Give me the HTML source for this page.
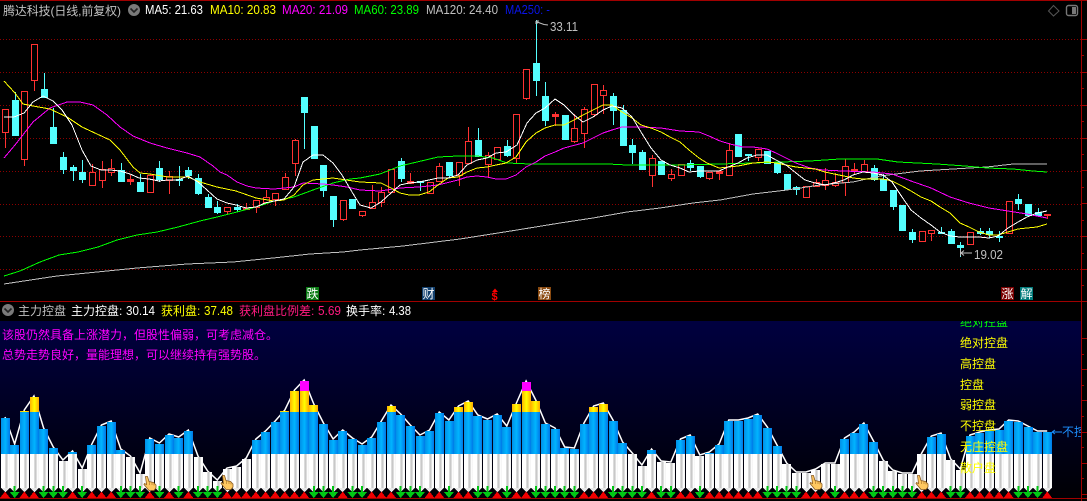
<!DOCTYPE html>
<html><head><meta charset="utf-8">
<style>
html,body{margin:0;padding:0;background:#000;width:1087px;height:501px;overflow:hidden}
svg{display:block}
text{font-family:"WenQuanYi Zen Hei","Liberation Sans","Noto Sans CJK SC",sans-serif;font-size:12px}
.n{font-family:"Liberation Sans","WenQuanYi Zen Hei",sans-serif;font-size:13px}
.m{stroke-width:1;fill:none;shape-rendering:crispEdges}
</style></head><body>
<svg id="s" width="1087" height="501" viewBox="0 0 1087 501" xmlns="http://www.w3.org/2000/svg">
<defs>
<linearGradient id="bg" x1="0" y1="0" x2="0" y2="1"><stop offset="0" stop-color="#000040"/><stop offset="1" stop-color="#000004"/></linearGradient>
<linearGradient id="wh"><stop offset="0" stop-color="#fff"/><stop offset=".46" stop-color="#fff"/><stop offset=".5" stop-color="#c8c8c8"/><stop offset=".72" stop-color="#c8c8c8"/><stop offset=".76" stop-color="#fff"/><stop offset="1" stop-color="#f4f4f4"/></linearGradient>
<linearGradient id="bl"><stop offset="0" stop-color="#0090e8"/><stop offset=".5" stop-color="#00b4ff"/><stop offset="1" stop-color="#0078e8"/></linearGradient>
<linearGradient id="go"><stop offset="0" stop-color="#ffb400"/><stop offset=".5" stop-color="#ffff00"/><stop offset="1" stop-color="#ffa800"/></linearGradient>
<clipPath id="cp"><rect x="0" y="321" width="1081" height="180"/></clipPath>
</defs>
<rect x="0" y="0" width="1087" height="1" fill="#a00000"/>
<rect x="0" y="321" width="1081" height="177" fill="url(#bg)"/>
<g id="grid" shape-rendering="crispEdges"></g>
<g id="cand"></g>
<polyline class="m" stroke="#c0c0c0" points="4,284 57,276 97,272 137,268 187,264 233,262 273,258 310,254 343,252 360,250 403,246 460,239 517,230 560,223 593,218 627,212 660,208 693,203 720,200 753,194 787,190 820,185 853,182 880,176 920,171 953,169 987,167 1013,164 1047,164"/>
<polyline class="m" stroke="#00ff00" points="4,276 20,271 40,262 59,255 78,252 98,247 117,240 137,235 157,232 178,227 200,221 217,217 233,213 256,207 274,201 294,197 313,190 333,183 350,179 360,178 380,174 390,170 400,166 417,162 438,157 458,156 477,156 493,158 507,163 530,164 560,164 587,164 608,164 627,165 680,165 720,164 753,163 810,161 840,159 877,159 898,162 937,164 965,166 987,168 1013,169 1033,171 1047,172"/>
<polyline class="m" stroke="#ff00ff" points="4,158 15,145 33,122 50,108 67,102 80,102 93,105 107,115 120,127 133,136 150,143 167,148 187,153 200,157 213,166 220,172 227,175 237,182 247,186 256,188 274,189 284,188 294,187 303,183 323,184 333,185 347,187 360,190 380,191 400,188 419,187 438,185 458,180 467,177 477,176 487,177 496,179 506,179 516,175 526,167 536,162 545,156 555,152 564,148 583,143 593,138 603,133 612,130 622,127 641,127 661,128 680,131 699,132 709,136 720,141 730,144 743,147 753,147 767,149 776,153 786,158 796,163 810,168 823,170 843,171 873,172 892,174 911,181 931,188 950,197 969,203 989,208 1008,211 1027,214 1047,218"/>
<polyline class="m" stroke="#ffff00" points="4,81 15,93 23,104 33,106 50,109 67,117 82,127 97,134 110,140 120,150 133,167 140,173 150,174 168,177 188,177 200,182 217,187 236,191 256,198 274,201 284,200 294,195 303,185 313,180 333,178 360,182 381,183 391,188 400,193 409,195 419,195 429,192 438,185 448,178 458,177 467,172 477,168 487,167 496,165 506,163 516,157 526,142 536,133 545,128 555,125 564,125 574,120 583,115 593,110 603,105 612,105 622,112 632,118 641,125 651,128 661,132 670,137 680,142 689,150 699,158 707,163 719,168 738,166 753,163 767,162 776,163 786,165 796,167 805,168 815,169 825,172 834,174 844,176 853,178 863,179 873,179 883,179 892,181 902,186 911,191 921,197 931,201 940,207 950,213 960,223 969,227 979,232 989,235 998,235 1008,232 1018,229 1027,228 1037,227 1047,224"/>
<polyline class="m" stroke="#ffffff" points="4,117 14,117 24,113 33,102 43,96 53,101 62,110 72,125 82,150 91,166 101,170 110,170 120,171 130,174 139,178 149,179 159,181 168,180 178,180 188,176 198,182 207,190 217,199 227,203 236,205 246,208 256,207 265,203 274,201 284,199 294,187 303,162 313,155 323,155 333,163 342,175 352,192 360,205 371,208 381,202 391,193 400,185 409,183 419,182 429,180 438,178 448,178 458,175 467,165 477,160 487,158 496,153 506,152 517,145 527,123 536,113 545,108 555,99 564,105 574,115 583,122 593,117 603,110 612,106 622,108 632,117 641,132 651,148 661,160 670,165 680,168 689,172 699,171 709,171 719,171 728,167 738,163 747,158 757,155 767,155 776,160 786,165 796,173 805,180 815,183 825,185 834,183 844,180 853,175 863,172 873,173 883,175 892,182 902,197 911,210 921,218 931,225 940,232 950,236 960,237 969,237 979,237 989,238 998,236 1008,228 1018,222 1027,217 1037,213 1047,211"/>

<!-- top legend -->
<text x="3" y="15" fill="#c0c0c0" textLength="118">腾达科技(日线,前复权)</text>
<circle cx="134" cy="10" r="6" fill="#7a7a7a"/><path d="M130.5 8.5L134 12L137.5 8.5" stroke="#222" stroke-width="1.6" fill="none"/>
<text class="n" x="145" y="14" fill="#fff" textLength="58" lengthAdjust="spacingAndGlyphs">MA5: 21.63</text>
<text class="n" x="210" y="14" fill="#ffff00" textLength="66" lengthAdjust="spacingAndGlyphs">MA10: 20.83</text>
<text class="n" x="282" y="14" fill="#ff00ff" textLength="66" lengthAdjust="spacingAndGlyphs">MA20: 21.09</text>
<text class="n" x="354" y="14" fill="#00ff00" textLength="65" lengthAdjust="spacingAndGlyphs">MA60: 23.89</text>
<text class="n" x="426" y="14" fill="#c0c0c0" textLength="72" lengthAdjust="spacingAndGlyphs">MA120: 24.40</text>
<text class="n" x="505" y="14" fill="#0a14e8" textLength="45" lengthAdjust="spacingAndGlyphs">MA250: -</text>
<path d="M1053.5 5.5L1059 11L1053.5 16L1048.5 11Z" fill="none" stroke="#555"/>
<rect x="1066.5" y="5.5" width="11" height="10" rx="2" fill="none" stroke="#777" stroke-width="1.4"/><rect x="1072" y="7" width="4" height="7" fill="#777"/>

<!-- extremes -->
<path d="M536 21L536 24M536 21L539 21M536 23L538 23M537 22L544 24.5L548 25" stroke="#c0c0c0" fill="none"/>
<text class="n" x="550" y="31" fill="#c0c0c0" textLength="28" lengthAdjust="spacingAndGlyphs">33.11</text>
<path d="M960.5 250V256M961 253H972M961 253L964 250.5M961 253L964 255.5" stroke="#c0c0c0" fill="none"/>
<text class="n" x="974" y="259" fill="#c0c0c0" textLength="29" lengthAdjust="spacingAndGlyphs">19.02</text>

<!-- event tags -->
<rect x="306" y="287" width="13" height="13" fill="#0a7a14"/><text x="306.5" y="298" fill="#fff">跌</text>
<rect x="422" y="287" width="13" height="13" fill="#12406e"/><text x="422.5" y="298" fill="#fff">财</text>
<path d="M495 288.5L498 292H492Z" fill="#f00"/><text class="n" x="491.5" y="300" fill="#f00" style="font-size:11px;font-weight:bold">$</text>
<rect x="538" y="287" width="13" height="13" fill="#8a4a10"/><text x="538.5" y="298" fill="#fff">榜</text>
<rect x="1001" y="287" width="13" height="13" fill="#7a0000"/><text x="1001.5" y="298" fill="#fff">涨</text>
<rect x="1020" y="287" width="13" height="13" fill="#007a7a"/><text x="1020.5" y="298" fill="#fff">解</text>

<!-- lower legend -->
<rect x="0" y="301" width="1087" height="1" fill="#a00000"/>
<circle cx="8" cy="310" r="6" fill="#7a7a7a"/><path d="M4.5 308.5L8 312L11.5 308.5" stroke="#222" stroke-width="1.6" fill="none"/>
<text x="18" y="315" fill="#c0c0c0">主力控盘</text>
<text x="71" y="315" fill="#fff">主力控盘:</text><text class="n" x="126" y="315" fill="#fff" textLength="29" lengthAdjust="spacingAndGlyphs">30.14</text>
<text x="161" y="315" fill="#ffff00">获利盘:</text><text class="n" x="204" y="315" fill="#ffff00" textLength="29" lengthAdjust="spacingAndGlyphs">37.48</text>
<text x="239" y="315" fill="#ff1a80">获利盘比例差:</text><text class="n" x="318" y="315" fill="#ff1a80" textLength="23" lengthAdjust="spacingAndGlyphs">5.69</text>
<text x="346" y="315" fill="#fff">换手率:</text><text class="n" x="389" y="315" fill="#fff" textLength="22" lengthAdjust="spacingAndGlyphs">4.38</text>

<!-- bars -->
<polyline id="ln" fill="none" stroke="#fff" stroke-width="1.5"/>
<g id="bars" shape-rendering="crispEdges"></g>
<g id="marks" shape-rendering="crispEdges"></g>
<g id="hands"></g>

<!-- messages -->
<text x="2" y="339" fill="#ff00ff">该股仍然具备上涨潜力&#xFF0C;但股性偏弱&#xFF0C;可考虑减仓。</text>
<text x="2" y="359" fill="#ff00ff">总势走势良好&#xFF0C;量能理想&#xFF0C;可以继续持有强势股。</text>

<!-- level labels -->
<g clip-path="url(#cp)">
<text x="960" y="326" fill="#00ff00">绝对控盘</text>
<text x="960" y="347" fill="#ffff00">绝对控盘</text>
<text x="960" y="368" fill="#ffff00">高控盘</text>
<text x="960" y="389" fill="#ffff00">控盘</text>
<text x="960" y="409" fill="#ffff00">弱控盘</text>
<text x="960" y="430" fill="#ffff00">不控盘</text>
<text x="960" y="451" fill="#ffff00">无庄控盘</text>
<text x="960" y="472" fill="#ffff00">散户盘</text>
<path d="M1052 432H1062M1052 432L1055 430M1052 432L1055 434" stroke="#1e90ff" fill="none"/>
<text x="1062" y="436" fill="#1e90ff">不控盘</text>
</g>

<!-- axes -->
<rect x="0" y="498" width="1087" height="1" fill="#a00000"/>
<rect x="1081" y="0" width="1" height="501" fill="#a00000"/>
<g id="ticks" shape-rendering="crispEdges"></g>
</svg>
<script>
var ns='http://www.w3.org/2000/svg';
function el(p,n,a){var e=document.createElementNS(ns,n);for(var k in a)e.setAttribute(k,a[k]);p.appendChild(e);return e}
var $=function(i){return document.getElementById(i)};
function cx(i){return 5+9.65*i}
[39,72,105,138,171,204,236,269].forEach(function(y){
 el($('grid'),'line',{x1:0,x2:1081,y1:y+.5,y2:y+.5,stroke:'#8c0000','stroke-dasharray':'1 2'})});
var C=[[0,109,109,132,148],[1,92,100,135,135],[0,91,91,159,166],[0,44,44,80,91],[1,73,89,97,97],[1,108,127,143,143],[1,152,157,169,174],[1,165,167,170,181],[1,160,172,179,183],[0,164,172,185,185],[0,161,169,180,188],[0,159,168,172,176],[1,163,170,181,182],[0,175,179,181,185],[1,174,182,191,191],[0,174,175,192,193],[1,161,168,179,182],[0,171,176,180,194],[1,166,179,180,186],[1,167,170,175,179],[1,174,178,193,195],[1,194,197,207,207],[1,201,207,212,214],[0,207,207,211,214],[1,204,207,209,212],[0,203,208,209,209],[0,200,200,207,213],[0,190,197,202,202],[0,193,193,199,206],[0,173,177,189,189],[0,139,140,163,176],[1,97,97,112,149],[1,126,126,158,158],[1,165,165,190,197],[1,196,196,219,227],[0,200,200,219,221],[1,199,199,208,209],[0,211,211,215,217],[0,185,202,208,208],[0,187,192,202,207],[0,169,169,192,192],[1,158,161,178,182],[0,173,181,183,183],[1,181,181,182,191],[0,182,182,193,193],[0,163,166,181,181],[1,162,162,175,177],[0,162,162,175,186],[0,127,141,163,163],[1,128,140,156,156],[0,152,155,164,177],[0,147,147,159,159],[1,140,146,155,157],[0,114,114,158,164],[0,69,69,98,100],[1,20,63,80,96],[1,82,96,120,126],[0,112,114,116,126],[1,115,115,139,139],[0,114,128,141,143],[0,107,109,133,148],[0,84,84,114,117],[0,85,90,95,114],[1,93,96,110,125],[1,105,110,145,145],[1,139,145,152,164],[1,150,152,169,170],[0,155,158,175,187],[1,161,161,174,174],[0,169,174,178,181],[0,164,164,175,175],[1,160,163,167,171],[1,166,166,176,178],[0,172,172,178,180],[0,171,171,173,180],[0,143,150,175,175],[1,134,134,156,156],[1,154,154,155,161],[0,149,149,157,161],[1,151,151,163,163],[1,162,162,172,174],[1,174,174,189,190],[1,186,187,189,195],[0,186,186,197,197],[0,179,182,186,187],[0,168,180,185,190],[0,173,182,185,187],[0,159,166,182,196],[0,163,169,171,175],[0,160,164,171,171],[1,165,168,179,181],[1,174,179,190,191],[1,190,190,206,210],[1,205,205,230,230],[1,229,232,239,243],[0,231,231,241,241],[0,230,230,233,241],[1,227,232,233,233],[1,229,231,243,243],[1,242,245,247,257],[0,232,232,244,245],[1,228,231,233,235],[1,228,231,234,238],[1,231,236,237,242],[0,201,201,233,233],[1,194,199,203,210],[1,204,204,215,215],[1,208,212,215,217],[0,214,214,215,219]];
var g=$('cand');g.setAttribute('shape-rendering','crispEdges');
C.forEach(function(d,i){
 var x=Math.round(cx(i)),col=d[0]?'#54ffff':'#ff3232';
 if(d[1]<d[2])el(g,'rect',{x:x,y:d[1],width:1,height:d[2]-d[1],fill:col});
 if(d[4]>d[3])el(g,'rect',{x:x,y:d[3],width:1,height:d[4]-d[3],fill:col});
 if(d[0])el(g,'rect',{x:x-3,y:d[2],width:7,height:Math.max(1,d[3]-d[2]+1),fill:col});
 else el(g,'rect',{x:x-2.5,y:d[2]+.5,width:6,height:Math.max(1,d[3]-d[2]),fill:d[3]-d[2]<3?col:'#000',stroke:col});
});
var T=[418,445,411,397,429,448,461,452,469,445,426,422,450,457,474,439,444,435,438,431,457,472,481,469,467,459,440,432,422,411,391,381,405,424,440,431,439,445,438,422,406,415,426,436,431,413,421,407,402,416,420,415,427,404,382,401,424,429,448,449,424,407,404,421,443,454,466,450,462,463,440,436,456,453,445,421,421,419,415,428,446,464,473,473,470,464,464,439,433,424,442,461,471,474,474,454,437,434,460,470,436,433,431,430,421,422,427,432,432];
var G={};[1,4,5,6,8,12,13,14,16,18,20,21,22,32,33,34,36,37,41,42,43,46,49,50,52,55,56,57,58,59,63,64,65,66,68,69,72,79,80,81,82,86,90,91,92,93,94,98,99,105,106,107].forEach(function(i){G[i]=1});
$('ln').setAttribute('points',T.map(function(t,i){return cx(i)+','+(t-1)}).join(' '));
var b=$('bars'),m=$('marks');
T.forEach(function(t,i){
 var c=cx(i),x=Math.round(c-4.4),w=9;
 function r(y1,y2,f){if(y2>y1)el(b,'rect',{x:x,y:y1,width:w,height:y2-y1,fill:f})}
 if(t<391)r(t,391,'#ff00ff');
 if(t<412)r(Math.max(t,391),412,'url(#go)');
 if(t<454)r(Math.max(t,412),454,'url(#bl)');
 r(Math.max(t,454),488,'url(#wh)');
 el(m,'path',{d:'M'+x+' 488L'+(x+w/2)+' 492L'+(x+w)+' 488Z',fill:'#e8e8e8'});
 if(G[i]){
  el(m,'path',{d:'M'+(c-1)+' 486H'+(c+1)+'V492H'+(c+5)+'L'+c+' 498L'+(c-5)+' 492H'+(c-1)+'Z',fill:'#00c814'});
 }else{
  el(m,'path',{d:'M'+(c-5)+' 498L'+c+' 491.5L'+(c+5)+' 498Z',fill:'#f00000'});
 }
});
[[143,476],[220,475],[809,475],[915,475]].forEach(function(p){
 var h=el($('hands'),'g',{transform:'translate('+p[0]+','+p[1]+')'});
 el(h,'path',{d:'M2.5 .5L4.5 .5L6 5.5L10.5 6.5L13 9L13 12L11 14.5L6 14.5L3.5 11.5L1 8.5L1.5 7.5L3.5 8.5Z',fill:'#ffc860',stroke:'#8a5a20','stroke-width':'.8'});
 el(h,'path',{d:'M6.5 6V9M9 6.5V9M11 7.5V9.5',stroke:'#b07a30','stroke-width':'.7',fill:'none'});
});
var tk=$('ticks');
for(var i=0;i<16;i++){var y=39+16.43*i;el(tk,'rect',{x:1082,y:Math.round(y),width:i%2?2:5,height:1,fill:'#a00000'})}
for(var i=0;i<11;i++){var y=338+15.6*i;el(tk,'rect',{x:1082,y:Math.round(y),width:i%2?2:5,height:1,fill:'#a00000'})}
</script>
</body></html>
